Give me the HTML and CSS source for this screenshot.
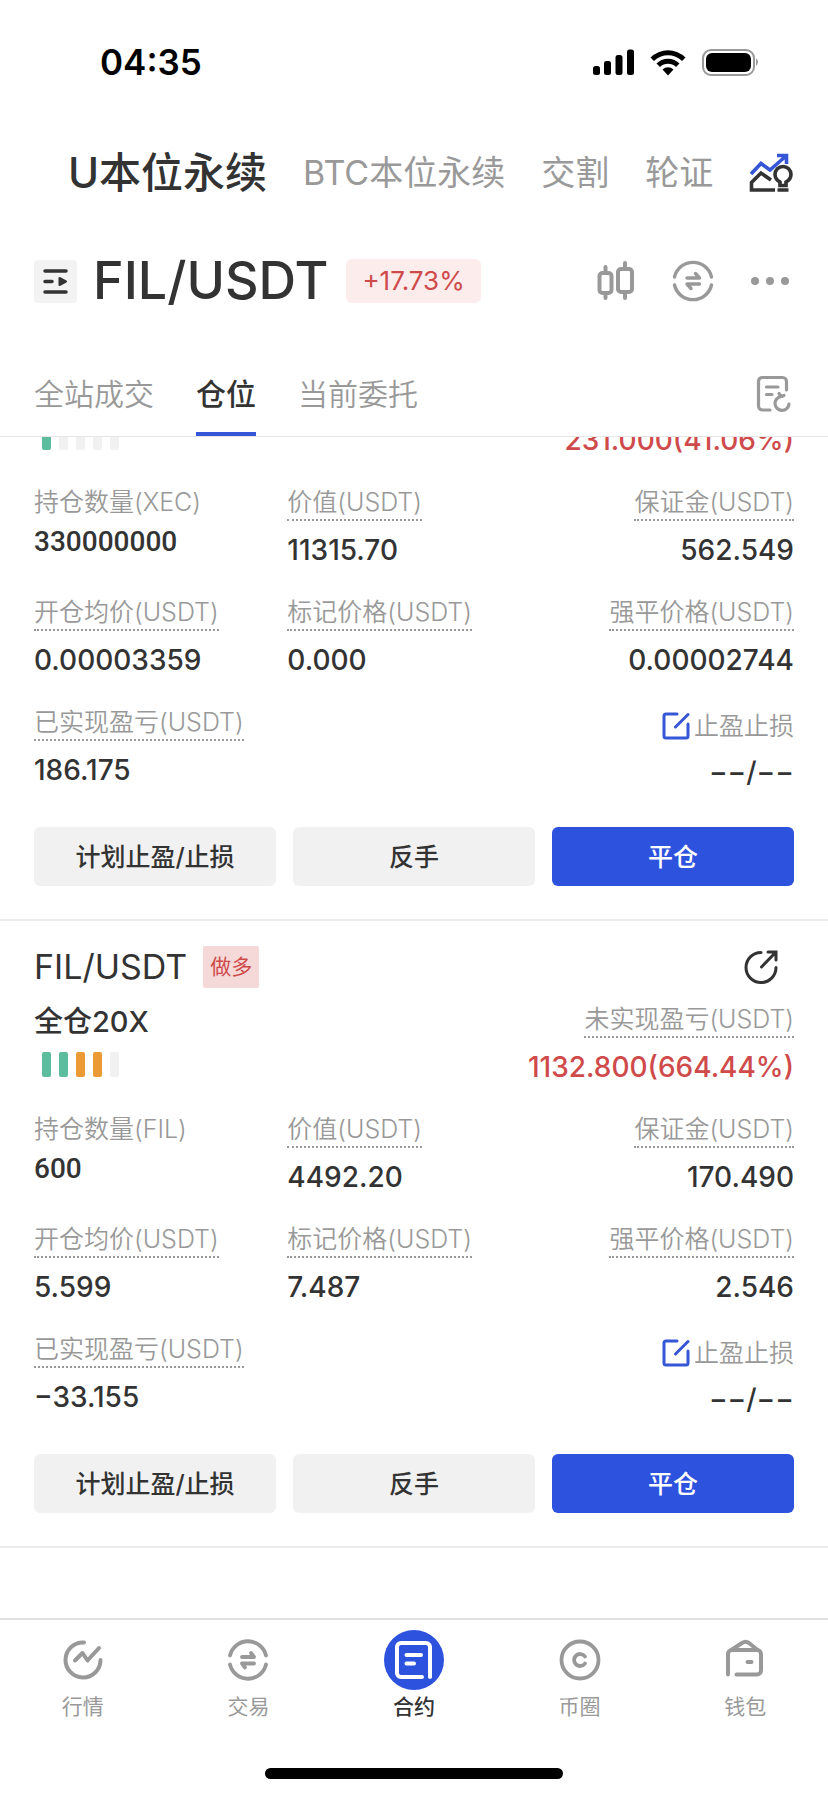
FILE: index.html
```html
<!DOCTYPE html>
<html lang="zh-CN">
<head>
<meta charset="UTF-8">
<meta name="viewport" content="width=device-width, initial-scale=1">
<title>U本位永续</title>
<link rel="stylesheet" href="styles.css">
</head>
<body>
	<div class="status">
		<span class="time">04:35</span>
		<div class="signals">
			<svg width="41" height="27" viewBox="0 0 41 27">
				<rect x="0" y="17" width="7" height="9" rx="2.5"/>
				<rect x="11" y="12" width="7" height="14" rx="2.5"/>
				<rect x="22.500" y="6" width="7" height="20" rx="2.5"/>
				<rect x="34" y="0.500" width="7" height="25.500" rx="2.5"/>
			</svg>
			<svg width="36" height="27" viewBox="0 0 36 27">
				<path d="M0.500 8.500A25 25 0 0 1 35.500 8.500L32 12A20 20 0 0 0 4 12Z"/>
				<path d="M6.500 14.500A16.500 16.500 0 0 1 29.500 14.500L26 18A11.500 11.500 0 0 0 10 18Z"/>
				<path d="M12.500 20.500A8 8 0 0 1 23.500 20.500L18 26.500Z"/>
			</svg>
			<svg width="58" height="27" viewBox="0 0 58 27">
				<rect x="1" y="1" width="51" height="25" rx="8" fill="none" stroke="#999" stroke-width="2"/>
				<rect x="4" y="4" width="45" height="19" rx="6"/>
				<path d="M54 9q4 4 0 8z" fill="#999"/>
			</svg>
		</div>
	</div>

	<nav class="markets">
		<a href="#" class="current">U本位永续</a>
		<a href="#">BTC本位永续</a>
		<a href="#">交割</a>
		<a href="#">轮证</a>
		<button class="icon-btn ideas" aria-label="策略">
			<svg width="44" height="42" viewBox="0 0 44 42" fill="none" stroke-width="3.600">
				<path d="M2 22L12 11.500L21 18L37 4M28 3.500H37.500V12" stroke="#3556d6"/>
				<path d="M26 38H2.500V30.500L12 21L22 28M28.500 38H39.500" stroke="#333"/>
				<path d="M31 33.500V30C27.500 28 26 25 26 22.500A8 8 0 0 1 42 22.500C42 25 40.500 28 37 30V33.500Z" stroke="#333"/>
			</svg>
		</button>
	</nav>

	<header class="pair">
		<button class="drawer" aria-label="切换交易对">
			<svg width="27" height="27" viewBox="0 0 27 27" fill="none" stroke="#333" stroke-width="3.500" stroke-linecap="round">
				<path d="M3 3H24M3 13.500H10M3 24H24"/>
				<path d="M17.500 10V17L24 13.500Z" fill="#333" stroke-width="2" stroke-linejoin="round"/>
			</svg>
		</button>
		<h1>FIL/USDT</h1>
		<span class="change">+17.73%</span>
		<div class="tools">
			<button class="icon-btn" aria-label="K线">
				<svg width="40" height="42" viewBox="0 0 40 42" fill="none" stroke="#999" stroke-width="4" stroke-linecap="round">
					<rect x="3.500" y="13" width="12" height="20" rx="3"/>
					<rect x="22" y="9" width="14" height="23" rx="3"/>
					<path d="M9.500 7V12M9.500 34V38M29 3V8M29 33V38"/>
				</svg>
			</button>
			<button class="icon-btn" aria-label="交易">
				<svg width="42" height="42" viewBox="0 0 42 42" fill="none" stroke="#999" stroke-width="3.400" stroke-linecap="round">
					<path d="M2.500 17A19 19 0 0 1 39.500 17M2.500 25A19 19 0 0 0 39.500 25"/>
					<path d="M15 18H27.500L23.500 13.500M27.500 24H15L19 28.500" stroke-linejoin="round"/>
				</svg>
			</button>
			<button class="icon-btn" aria-label="更多">
				<svg width="40" height="42" viewBox="0 0 40 42" fill="#999">
					<circle cx="5" cy="21" r="4"/><circle cx="20" cy="21" r="4"/><circle cx="35" cy="21" r="4"/>
				</svg>
			</button>
		</div>
	</header>

	<nav class="tabs">
		<a href="#">全站成交</a>
		<a href="#" class="active">仓位</a>
		<a href="#">当前委托</a>
		<button class="icon-btn history" aria-label="历史">
			<svg width="36" height="38" viewBox="0 0 36 38" fill="none" stroke="#999" stroke-width="3.200" stroke-linecap="round">
				<path d="M14 35H6.500A4 4 0 0 1 2.500 31V6A4 4 0 0 1 6.500 2.500H26.500A4 4 0 0 1 30.500 6.500V15M10.500 12H22M10.500 19.500H16"/>
				<path d="M33 29A7 7 0 1 1 25 21.500L23 18.500M25 21.500L28 20.500"/>
			</svg>
		</button>
	</nav>

	<main class="positions">
		<section class="card">
			<div class="summary">
				<div class="risk"><i class="low"></i><i></i><i></i><i></i><i></i></div>
				<div class="cell right">
					<strong class="value loss">231.000(41.06%)</strong>
				</div>
			</div>
			<div class="stats">
				<div class="cell">
					<span class="label">持仓数量(XEC)</span>
					<strong class="value count">330000000</strong>
				</div>
				<div class="cell">
					<span class="label hint">价值(USDT)</span>
					<strong class="value">11315.70</strong>
				</div>
				<div class="cell right">
					<span class="label hint">保证金(USDT)</span>
					<strong class="value">562.549</strong>
				</div>
				<div class="cell">
					<span class="label hint">开仓均价(USDT)</span>
					<strong class="value">0.00003359</strong>
				</div>
				<div class="cell">
					<span class="label hint">标记价格(USDT)</span>
					<strong class="value">0.000</strong>
				</div>
				<div class="cell right">
					<span class="label hint">强平价格(USDT)</span>
					<strong class="value">0.00002744</strong>
				</div>
				<div class="cell">
					<span class="label hint">已实现盈亏(USDT)</span>
					<strong class="value">186.175</strong>
				</div>
				<div class="cell right last">
					<button class="edit">
						<svg width="28" height="28" viewBox="0 0 28 28" fill="none" stroke="#3556d6" stroke-width="3" stroke-linecap="round">
							<path d="M15 2H4A2 2 0 0 0 2 4V24A2 2 0 0 0 4 26H24A2 2 0 0 0 26 24V12M13.500 15L26 2.500"/>
						</svg>止盈止损</button>
					<strong class="value">−−/−−</strong>
				</div>
			</div>
			<div class="actions">
				<button>计划止盈/止损</button>
				<button>反手</button>
				<button class="primary">平仓</button>
			</div>
		</section>

		<section class="card">
			<div class="head">
				<h2>FIL/USDT</h2>
				<span class="side">做多</span>
				<button class="icon-btn share" aria-label="分享">
					<svg width="36" height="36" viewBox="0 0 36 36" fill="none" stroke="#333" stroke-width="3" stroke-linecap="round">
						<path d="M18 3.500A15 15 0 1 0 33 18.500M18.500 18L32.500 3.500M25 3H33V11"/>
					</svg>
				</button>
			</div>
			<div class="summary">
				<div>
					<div class="leverage">全仓20X</div>
					<div class="risk"><i class="low"></i><i class="low"></i><i class="mid"></i><i class="mid"></i><i></i></div>
				</div>
				<div class="cell right">
					<span class="label hint">未实现盈亏(USDT)</span>
					<strong class="value loss">1132.800(664.44%)</strong>
				</div>
			</div>
			<div class="stats">
				<div class="cell">
					<span class="label">持仓数量(FIL)</span>
					<strong class="value count">600</strong>
				</div>
				<div class="cell">
					<span class="label hint">价值(USDT)</span>
					<strong class="value">4492.20</strong>
				</div>
				<div class="cell right">
					<span class="label hint">保证金(USDT)</span>
					<strong class="value">170.490</strong>
				</div>
				<div class="cell">
					<span class="label hint">开仓均价(USDT)</span>
					<strong class="value">5.599</strong>
				</div>
				<div class="cell">
					<span class="label hint">标记价格(USDT)</span>
					<strong class="value">7.487</strong>
				</div>
				<div class="cell right">
					<span class="label hint">强平价格(USDT)</span>
					<strong class="value">2.546</strong>
				</div>
				<div class="cell">
					<span class="label hint">已实现盈亏(USDT)</span>
					<strong class="value">−33.155</strong>
				</div>
				<div class="cell right last">
					<button class="edit">
						<svg width="28" height="28" viewBox="0 0 28 28" fill="none" stroke="#3556d6" stroke-width="3" stroke-linecap="round">
							<path d="M15 2H4A2 2 0 0 0 2 4V24A2 2 0 0 0 4 26H24A2 2 0 0 0 26 24V12M13.500 15L26 2.500"/>
						</svg>止盈止损</button>
					<strong class="value">−−/−−</strong>
				</div>
			</div>
			<div class="actions">
				<button>计划止盈/止损</button>
				<button>反手</button>
				<button class="primary">平仓</button>
			</div>
		</section>
	</main>

	<nav class="tabbar">
		<a href="#">
			<span class="tab-icon"><svg width="42" height="42" viewBox="0 0 42 42" fill="none" stroke="#999" stroke-width="4" stroke-linecap="round">
				<path d="M22 3.500A17.500 17.500 0 1 0 38.500 21M13 21.500L20.500 14L25.500 21.500L37 9" stroke-linejoin="round"/>
			</svg></span>
			行情
		</a>
		<a href="#">
			<span class="tab-icon"><svg width="42" height="42" viewBox="0 0 42 42" fill="none" stroke="#999" stroke-width="3.800" stroke-linecap="round">
				<path d="M3 16.500A18.500 18.500 0 0 1 39 16.500M3 25.500A18.500 18.500 0 0 0 39 25.500"/>
				<path d="M15 18H27L24 14M27 24.500H15L18 28.500" stroke-linejoin="round"/>
			</svg></span>
			交易
		</a>
		<a href="#" class="active">
			<span class="tab-icon"><svg width="42" height="42" viewBox="0 0 42 42" fill="none" stroke="#fff" stroke-width="4" stroke-linecap="round">
				<path d="M29 38H8A4 4 0 0 1 4 34V8A4 4 0 0 1 8 4H33A4 4 0 0 1 37 8V38M13.500 16H28M13.500 24.500H21"/>
			</svg></span>
			合约
		</a>
		<a href="#">
			<span class="tab-icon"><svg width="42" height="42" viewBox="0 0 42 42" fill="none" stroke="#999" stroke-width="3.800" stroke-linecap="round">
				<circle cx="21" cy="21" r="18.500"/>
				<path d="M26 17.500A6 6 0 1 0 26 24.500"/>
			</svg></span>
			币圈
		</a>
		<a href="#">
			<span class="tab-icon"><svg width="42" height="42" viewBox="0 0 42 42" fill="none" stroke="#999" stroke-width="4" stroke-linecap="round">
				<path d="M4 35.500V15A4 4 0 0 1 8 11H33A4 4 0 0 1 37 15V31.500A4 4 0 0 1 33 35.500H12.500M23.500 23H27.500"/>
				<path d="M8 10.500L18 4Q21.500 1.500 25 4L33 10.500"/>
			</svg></span>
			钱包
		</a>
	</nav>
	<div class="home"></div>
</body>
</html>
```
FILE: styles.css
```css
*{ box-sizing: border-box; }
body{
	display: flex;
	flex-direction: column;
	height: 100vh;
	margin: 0;
	background: #fff;
	color: #333;
	font: 25px/34px Inter, "Noto Sans CJK SC", sans-serif;
}
a{ color: inherit; text-decoration: none; }
h1, h2{ margin: 0; font-weight: 500; }
button{
	padding: 0;
	border: 0;
	background: none;
	color: inherit;
	font: inherit;
}
svg{ display: block; }

.status{
	display: flex;
	justify-content: space-between;
	align-items: center;
	height: 124px;
	padding: 0 68px 0 100px;
	color: #000;
}
.time{ font-size: 35px; font-weight: 600; }
.signals{ display: flex; gap: 16px; }

.markets{
	display: flex;
	align-items: center;
	gap: 36px;
	height: 98px;
	padding: 0 36px 0 68px;
	color: #999;
	font-size: 34px;
	white-space: nowrap;
}
.markets .current{ color: #333; font-size: 42px; font-weight: 500; }
.ideas{ margin-left: auto; }

.pair{
	display: flex;
	align-items: center;
	height: 118px;
	padding: 0 38px 0 34px;
}
.drawer{
	padding: 8px;
	border-radius: 4px;
	background: #f3f3f3;
}
.pair h1{
	margin: 0 18px 0 16px;
	font-size: 52px;
	line-height: 60px;
}
.change{
	padding: 5px 16px;
	border-radius: 6px;
	background: #fcecec;
	color: #cf4a4a;
	font-size: 26px;
}
.tools{
	display: flex;
	gap: 36px;
	margin-left: auto;
}

.tabs{
	display: flex;
	gap: 42px;
	height: 97px;
	padding: 0 36px 0 34px;
	border-bottom: 1px solid #e6e6e6;
	color: #999;
	font-size: 30px;
	font-weight: 350;
	line-height: 108px;
}
.tabs .active{
	border-bottom: 4px solid #3556d6;
	color: #333;
	font-weight: 500;
}
.history{ margin-left: auto; padding-top: 12px; }

/* the list is scrolled to its end, the first card runs out at the top */
.positions{
	display: flex;
	flex: 1;
	flex-direction: column;
	justify-content: flex-end;
	min-height: 0;
	padding-bottom: 70px;
	overflow: hidden;
}
.card{
	flex: none;
	padding: 25px 34px 33px;
	border-bottom: 2px solid #ececec;
}
.head{
	display: flex;
	align-items: center;
	height: 42px;
	margin-bottom: 14px;
}
.head h2{ font-size: 34px; font-weight: 400; }
.side{
	margin-left: 16px;
	padding: 0 7px;
	border-radius: 2px;
	background: #f5d9d9;
	color: #cf4a4a;
	font-size: 21px;
	line-height: 42px;
}
.share{ margin: 0 15px 0 auto; }
.summary{
	display: flex;
	justify-content: space-between;
	align-items: flex-end;
	margin-bottom: 28px;
}
.leverage{
	font-size: 29px;
	font-weight: 500;
	line-height: 36px;
}
.risk{
	display: flex;
	gap: 8px;
	margin: 12px 8px 7px;
}
.risk i{
	width: 9px; height: 25px;
	border-radius: 2px;
	background: #f1f1f1;
}
.risk .low{ background: #5bbd9d; }
.risk .mid{ background: #ec9a35; }

.stats{
	display: grid;
	grid-template-columns: repeat(3, 1fr);
	row-gap: 28px;
}
.cell{
	display: flex;
	flex-direction: column;
	align-items: flex-start;
	white-space: nowrap;
}
.right{ align-items: flex-end; }
.last{ grid-column: 3; }
.label{
	margin-bottom: 6px;
	color: #999;
	font-weight: 350;
}
.hint{
	margin-bottom: 12px;
	border-bottom: 2px dotted #999;
}
.value{ font-size: 28px; font-weight: 500; }
.count{ font-family: Roboto, sans-serif; }
.loss{ color: #cf4a4a; }
.edit{
	display: flex;
	align-items: center;
	gap: 4px;
	height: 42px;
	margin-bottom: 8px;
	color: #999;
	font-weight: 350;
}

.actions{
	display: grid;
	grid-template-columns: repeat(3, 1fr);
	gap: 17px;
	margin-top: 38px;
}
.actions button{
	height: 59px;
	border-radius: 6px;
	background: #f1f1f1;
	font-weight: 500;
}
.actions .primary{ background: #2d52de; color: #fff; }

.tabbar{
	display: flex;
	height: 150px;
	padding-top: 10px;
	border-top: 2px solid #e0e0e0;
	color: #999;
	font-size: 21px;
}
.tabbar a{
	display: flex;
	flex: 1;
	flex-direction: column;
	align-items: center;
}
.tabbar .active{ color: #333; font-weight: 500; }
.tab-icon{
	display: grid;
	place-items: center;
	width: 60px; height: 60px;
	border-radius: 50%;
}
.active .tab-icon{ background: #2d52de; }
.home{
	width: 36%; height: 11px;
	margin: 0 auto 17px;
	border-radius: 6px;
	background: #000;
}
```
